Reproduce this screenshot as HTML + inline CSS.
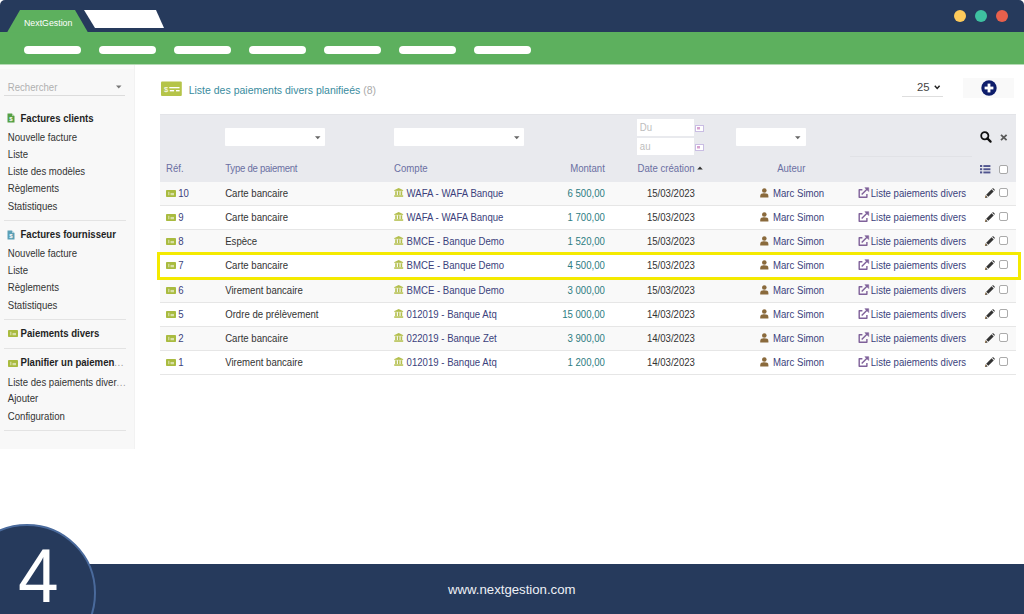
<!DOCTYPE html>
<html><head><meta charset="utf-8"><style>
*{box-sizing:border-box;margin:0;padding:0}
html,body{width:1024px;height:614px;overflow:hidden;background:#fff;font-family:"Liberation Sans",sans-serif}
.t{position:absolute;white-space:nowrap}
.r{position:absolute}
.abs{position:absolute}
svg{position:absolute;overflow:visible}
</style></head><body>
<div class="r" style="left:0px;top:0px;width:1024px;height:33px;background:#263a5c;border-radius:5px 5px 0 0;"></div>
<div class="r" style="left:0px;top:32px;width:1024px;height:32px;background:#5db05e;"></div>
<svg style="left:0;top:0" width="200" height="64"><polygon points="20,10 75,10 88,32.5 7,32.5" fill="#5db05e"/><polygon points="84,10 156,10 164,28 95,28" fill="#fff"/></svg>
<div class="t" style="left:24px;top:18.25px;height:11px;line-height:11px;font-size:8.8px;color:#fff;font-weight:normal;transform:scaleY(1.04);transform-origin:0 8.55px;">NextGestion</div>
<div class="r" style="left:23.5px;top:46px;width:57px;height:8px;background:#fff;border-radius:4px;"></div>
<div class="r" style="left:98.5px;top:46px;width:57px;height:8px;background:#fff;border-radius:4px;"></div>
<div class="r" style="left:173.5px;top:46px;width:57px;height:8px;background:#fff;border-radius:4px;"></div>
<div class="r" style="left:248.5px;top:46px;width:57px;height:8px;background:#fff;border-radius:4px;"></div>
<div class="r" style="left:323.5px;top:46px;width:57px;height:8px;background:#fff;border-radius:4px;"></div>
<div class="r" style="left:398.5px;top:46px;width:57px;height:8px;background:#fff;border-radius:4px;"></div>
<div class="r" style="left:473.5px;top:46px;width:57px;height:8px;background:#fff;border-radius:4px;"></div>
<div class="r" style="left:954px;top:10px;width:12px;height:12px;background:#fdca5b;border-radius:6px;"></div>
<div class="r" style="left:975px;top:10px;width:12px;height:12px;background:#3ec1a1;border-radius:6px;"></div>
<div class="r" style="left:996.3px;top:10px;width:12px;height:12px;background:#e8604c;border-radius:6px;"></div>
<div class="r" style="left:0px;top:64px;width:135px;height:385px;background:#f8f8f8;border-right:1px solid #f2f2f2;"></div>
<div class="r" style="left:0px;top:64px;width:134px;height:5px;background:#fbfbfb;"></div>
<div class="r" style="left:0px;top:64px;width:1024px;height:1px;background:#b5dab5;"></div>
<div class="t" style="left:7.8px;top:81.57px;height:12px;line-height:12px;font-size:9.6px;color:#b0b0b0;font-weight:normal;transform:scaleY(1.04);transform-origin:0 9.33px;">Rechercher</div>
<svg style="left:116px;top:85px" width="6" height="4"><polygon points="0,0.5 5.5,0.5 2.75,3.5" fill="#777"/></svg>
<div class="r" style="left:4px;top:95px;width:121px;height:1px;background:#dcdcdc;"></div>
<svg style="left:7px;top:112.8px" width="8" height="10"><path d="M0.5 0.5 H5 L7.5 3 V9.5 H0.5 Z" fill="#55a045"/><path d="M5 0.5 V3 H7.5" fill="#fff" opacity="0.5"/><text x="4" y="8.3" font-size="6" font-family="Liberation Sans" font-weight="bold" fill="#fff" text-anchor="middle">$</text></svg>
<div class="t" style="left:20.5px;top:112.97px;height:12px;line-height:12px;font-size:9.6px;color:#1f1f1f;font-weight:bold;transform:scaleY(1.04);transform-origin:0 9.33px;">Factures clients</div>
<div class="t" style="left:7.8px;top:131.87px;height:12px;line-height:12px;font-size:9.6px;color:#333;font-weight:normal;transform:scaleY(1.04);transform-origin:0 9.33px;">Nouvelle facture</div>
<div class="t" style="left:7.8px;top:148.97px;height:12px;line-height:12px;font-size:9.6px;color:#333;font-weight:normal;transform:scaleY(1.04);transform-origin:0 9.33px;">Liste</div>
<div class="t" style="left:7.8px;top:166.07px;height:12px;line-height:12px;font-size:9.6px;color:#333;font-weight:normal;transform:scaleY(1.04);transform-origin:0 9.33px;">Liste des modèles</div>
<div class="t" style="left:7.8px;top:183.17px;height:12px;line-height:12px;font-size:9.6px;color:#333;font-weight:normal;transform:scaleY(1.04);transform-origin:0 9.33px;">Règlements</div>
<div class="t" style="left:7.8px;top:200.77px;height:12px;line-height:12px;font-size:9.6px;color:#333;font-weight:normal;transform:scaleY(1.04);transform-origin:0 9.33px;">Statistiques</div>
<div class="r" style="left:4px;top:220px;width:122px;height:1px;background:#e3e3e3;"></div>
<svg style="left:7px;top:229.5px" width="8" height="10"><path d="M0.5 0.5 H5 L7.5 3 V9.5 H0.5 Z" fill="#5b9fb5"/><path d="M5 0.5 V3 H7.5" fill="#fff" opacity="0.5"/><text x="4" y="8.3" font-size="6" font-family="Liberation Sans" font-weight="bold" fill="#fff" text-anchor="middle">$</text></svg>
<div class="t" style="left:20.5px;top:229.27px;height:12px;line-height:12px;font-size:9.6px;color:#1f1f1f;font-weight:bold;transform:scaleY(1.04);transform-origin:0 9.33px;">Factures fournisseur</div>
<div class="t" style="left:7.8px;top:247.67px;height:12px;line-height:12px;font-size:9.6px;color:#333;font-weight:normal;transform:scaleY(1.04);transform-origin:0 9.33px;">Nouvelle facture</div>
<div class="t" style="left:7.8px;top:265.27px;height:12px;line-height:12px;font-size:9.6px;color:#333;font-weight:normal;transform:scaleY(1.04);transform-origin:0 9.33px;">Liste</div>
<div class="t" style="left:7.8px;top:282.37px;height:12px;line-height:12px;font-size:9.6px;color:#333;font-weight:normal;transform:scaleY(1.04);transform-origin:0 9.33px;">Règlements</div>
<div class="t" style="left:7.8px;top:299.97px;height:12px;line-height:12px;font-size:9.6px;color:#333;font-weight:normal;transform:scaleY(1.04);transform-origin:0 9.33px;">Statistiques</div>
<div class="r" style="left:4px;top:319px;width:122px;height:1px;background:#e3e3e3;"></div>
<svg style="left:7.5px;top:330px" width="10" height="7"><rect x="0" y="0" width="10" height="7" rx="0.8" fill="#a9bb3f"/><g fill="#fff" opacity="0.55"><rect x="2.20" y="1.75" width="1.20" height="3.50"/><rect x="4.50" y="2.94" width="3.50" height="2.31"/></g></svg>
<div class="t" style="left:20.5px;top:327.77px;height:12px;line-height:12px;font-size:9.6px;color:#1f1f1f;font-weight:bold;transform:scaleY(1.04);transform-origin:0 9.33px;">Paiements divers</div>
<div class="r" style="left:4px;top:348px;width:122px;height:1px;background:#e3e3e3;"></div>
<svg style="left:7.5px;top:359.5px" width="10" height="7"><rect x="0" y="0" width="10" height="7" rx="0.8" fill="#a9bb3f"/><g fill="#fff" opacity="0.55"><rect x="2.20" y="1.75" width="1.20" height="3.50"/><rect x="4.50" y="2.94" width="3.50" height="2.31"/></g></svg>
<div class="t" style="left:20.5px;top:357.17px;height:12px;line-height:12px;font-size:9.6px;color:#1f1f1f;font-weight:bold;transform:scaleY(1.04);transform-origin:0 9.33px;">Planifier un paiemen<span style="color:#9a9a9a;font-weight:normal;letter-spacing:0.6px">...</span></div>
<div class="t" style="left:7.8px;top:376.77px;height:12px;line-height:12px;font-size:9.6px;color:#333;font-weight:normal;transform:scaleY(1.04);transform-origin:0 9.33px;">Liste des paiements diver<span style="color:#9a9a9a;letter-spacing:0.6px">...</span></div>
<div class="t" style="left:7.8px;top:393.07px;height:12px;line-height:12px;font-size:9.6px;color:#333;font-weight:normal;transform:scaleY(1.04);transform-origin:0 9.33px;">Ajouter</div>
<div class="t" style="left:7.8px;top:410.97px;height:12px;line-height:12px;font-size:9.6px;color:#333;font-weight:normal;transform:scaleY(1.04);transform-origin:0 9.33px;">Configuration</div>
<div class="r" style="left:4px;top:430px;width:122px;height:1px;background:#e3e3e3;"></div>
<svg style="left:161px;top:81px" width="21" height="16"><rect y="0.5" width="20.8" height="14.4" rx="1" fill="#b5c449"/><text x="5" y="11" font-size="7.5" font-family="Liberation Sans" fill="#fff" text-anchor="middle">$</text><rect x="8.3" y="6" width="10.2" height="1.3" fill="#fff"/><rect x="8.8" y="9" width="4.3" height="1.4" fill="#fff"/><rect x="15" y="9" width="3.6" height="1.4" fill="#fff"/></svg>
<div class="t" style="left:188.7px;top:82.56px;height:14px;line-height:14px;font-size:10.5px;color:#3a8c9e;font-weight:normal;transform:scaleY(1.04);transform-origin:0 10.64px;">Liste des paiements divers planifieés <span style="color:#aaa">(8)</span></div>
<div class="t" style="left:917px;top:79.78px;height:15px;line-height:15px;font-size:11.3px;color:#444;font-weight:normal;">25</div>
<svg style="left:934px;top:85px" width="7" height="5"><path d="M0.8 0.8 L3.2 3.4 L5.6 0.8" stroke="#222" stroke-width="1.5" fill="none"/></svg>
<div class="r" style="left:902px;top:96px;width:41px;height:1px;background:#dedede;"></div>
<div class="r" style="left:963px;top:78px;width:51px;height:20px;background:#f9f9f9;"></div>
<svg style="left:981px;top:80px" width="16" height="16"><circle cx="8" cy="8" r="7.7" fill="#0e1d6b"/><rect x="3.6" y="6.6" width="8.8" height="2.8" fill="#fff"/><rect x="6.6" y="3.6" width="2.8" height="8.8" fill="#fff"/></svg>
<div class="r" style="left:160px;top:114px;width:856px;height:68px;background:#e9eaee;border-top:1px solid #e3e4e8;"></div>
<div class="r" style="left:850px;top:156px;width:122px;height:1px;background:#e1e2e6;"></div>
<div class="r" style="left:225px;top:128px;width:100px;height:18px;background:#fff;border-radius:1px;"></div>
<svg style="left:314.8px;top:136px" width="6" height="4"><polygon points="0,0.3 5.5,0.3 2.75,3.3" fill="#666"/></svg>
<div class="r" style="left:394px;top:128px;width:130px;height:18px;background:#fff;border-radius:1px;"></div>
<svg style="left:513.8px;top:136px" width="6" height="4"><polygon points="0,0.3 5.5,0.3 2.75,3.3" fill="#666"/></svg>
<div class="r" style="left:736px;top:128px;width:69.5px;height:18px;background:#fff;border-radius:1px;"></div>
<svg style="left:795.3px;top:136px" width="6" height="4"><polygon points="0,0.3 5.5,0.3 2.75,3.3" fill="#666"/></svg>
<div class="r" style="left:636.5px;top:119px;width:57.5px;height:17px;background:#fff;"></div>
<div class="r" style="left:636.5px;top:138px;width:57.5px;height:17px;background:#fff;"></div>
<div class="t" style="left:639.8px;top:121.67px;height:12px;line-height:12px;font-size:9.6px;color:#bdbdbd;font-weight:normal;transform:scaleY(1.04);transform-origin:0 9.33px;">Du</div>
<div class="t" style="left:639.8px;top:140.97px;height:12px;line-height:12px;font-size:9.6px;color:#bdbdbd;font-weight:normal;transform:scaleY(1.04);transform-origin:0 9.33px;">au</div>
<svg style="left:695px;top:124.5px" width="9" height="7"><rect x="0.5" y="0.5" width="8" height="6" fill="#fff" stroke="#c9bde3" stroke-width="1"/><rect x="2" y="2" width="3" height="2.5" fill="#d7a3d0"/></svg>
<svg style="left:695px;top:143.5px" width="9" height="7"><rect x="0.5" y="0.5" width="8" height="6" fill="#fff" stroke="#c9bde3" stroke-width="1"/><rect x="2" y="2" width="3" height="2.5" fill="#d7a3d0"/></svg>
<svg style="left:979.5px;top:131px" width="12" height="12"><circle cx="4.8" cy="4.8" r="3.6" stroke="#111" stroke-width="1.8" fill="none"/><path d="M7.4 7.4 L10.6 10.6" stroke="#111" stroke-width="2.2" stroke-linecap="round"/></svg>
<svg style="left:999.5px;top:134px" width="8" height="7"><path d="M1 0.8 L6.6 6.2 M6.6 0.8 L1 6.2" stroke="#5a5a5a" stroke-width="1.8"/></svg>
<div class="t" style="left:166px;top:162.87px;height:12px;line-height:12px;font-size:9.6px;color:#6b70a3;font-weight:normal;transform:scaleY(1.04);transform-origin:0 9.33px;">Réf.</div>
<div class="t" style="left:225.3px;top:162.87px;height:12px;line-height:12px;font-size:9.6px;color:#6b70a3;font-weight:normal;letter-spacing:-0.27px;transform:scaleY(1.04);transform-origin:0 9.33px;">Type de paiement</div>
<div class="t" style="left:394.1px;top:162.87px;height:12px;line-height:12px;font-size:9.6px;color:#6b70a3;font-weight:normal;transform:scaleY(1.04);transform-origin:0 9.33px;">Compte</div>
<div class="t" style="right:419.20000000000005px;top:162.87px;height:12px;line-height:12px;font-size:9.6px;color:#6b70a3;font-weight:normal;transform:scaleY(1.04);transform-origin:0 9.33px;">Montant</div>
<div class="t" style="left:637.6px;top:162.87px;height:12px;line-height:12px;font-size:9.6px;color:#6b70a3;font-weight:normal;transform:scaleY(1.04);transform-origin:0 9.33px;">Date création</div>
<svg style="left:697px;top:166px" width="7" height="4"><polygon points="0.2,3.5 5.8,3.5 3,0.5" fill="#333"/></svg>
<div class="t" style="right:218.60000000000002px;top:162.87px;height:12px;line-height:12px;font-size:9.6px;color:#6b70a3;font-weight:normal;transform:scaleY(1.04);transform-origin:0 9.33px;">Auteur</div>
<svg style="left:980px;top:165px" width="11" height="9"><g fill="#50558e"><rect x="0" y="0" width="2.2" height="2"/><rect x="0" y="3.2" width="2.2" height="2"/><rect x="0" y="6.4" width="2.2" height="2"/><rect x="3.4" y="0.1" width="7" height="1.9"/><rect x="3.4" y="3.3" width="7" height="1.9"/><rect x="3.4" y="6.5" width="7" height="1.9"/></g></svg>
<div class="r" style="left:999px;top:165.3px;width:8.5px;height:8.5px;background:#fff;border:1px solid #a8a8a8;border-radius:2px;"></div>
<div class="r" style="left:160px;top:182px;width:856px;height:23px;background:#f9f9f9;"></div>
<div class="r" style="left:160px;top:205px;width:856px;height:1px;background:#e6e6e6;"></div>
<svg style="left:165.5px;top:190px" width="10" height="7"><rect x="0" y="0" width="10" height="7" rx="0.8" fill="#a9bb3f"/><g fill="#fff" opacity="0.55"><rect x="2.20" y="1.75" width="1.20" height="3.50"/><rect x="4.50" y="2.94" width="3.50" height="2.31"/></g></svg>
<div class="t" style="left:178.2px;top:187.77px;height:12px;line-height:12px;font-size:9.6px;color:#3b3f7c;font-weight:normal;transform:scaleY(1.04);transform-origin:0 9.33px;">10</div>
<div class="t" style="left:225.2px;top:187.77px;height:12px;line-height:12px;font-size:9.6px;color:#333;font-weight:normal;transform:scaleY(1.04);transform-origin:0 9.33px;">Carte bancaire</div>
<svg style="left:393.6px;top:188.2px" width="10" height="9"><g fill="#b3bf4c"><polygon points="4.7,0 9.4,2.3 0,2.3"/><rect x="0.3" y="2.2" width="8.8" height="0.9"/><rect x="1.2" y="3.3" width="1.6" height="3.9"/><rect x="3.9" y="3.3" width="1.6" height="3.9"/><rect x="6.6" y="3.3" width="1.6" height="3.9"/><rect x="0.2" y="7.3" width="9" height="1.5"/></g></svg>
<div class="t" style="left:406.6px;top:187.77px;height:12px;line-height:12px;font-size:9.6px;color:#3b3f7c;font-weight:normal;transform:scaleY(1.04);transform-origin:0 9.33px;">WAFA - WAFA Banque</div>
<div class="t" style="right:419.20000000000005px;top:187.77px;height:12px;line-height:12px;font-size:9.6px;color:#2c7c82;font-weight:normal;transform:scaleY(1.04);transform-origin:0 9.33px;">6 500,00</div>
<div class="t" style="left:646.9px;top:187.77px;height:12px;line-height:12px;font-size:9.6px;color:#333;font-weight:normal;transform:scaleY(1.04);transform-origin:0 9.33px;">15/03/2023</div>
<svg style="left:759.6px;top:188.2px" width="9" height="10"><g fill="#8a6a3c"><circle cx="4.3" cy="2.5" r="2.3"/><path d="M0.2 9.6 V7.9 C0.2 5.9 1.8 5.3 4.3 5.3 C6.8 5.3 8.4 5.9 8.4 7.9 V9.6 Z"/></g></svg>
<div class="t" style="left:773px;top:187.77px;height:12px;line-height:12px;font-size:9.6px;color:#3b3f7c;font-weight:normal;transform:scaleY(1.04);transform-origin:0 9.33px;">Marc Simon</div>
<svg style="left:857.5px;top:187px" width="12" height="12"><g stroke="#7f619a" fill="none" stroke-width="1.4" stroke-linejoin="round"><path d="M4.4 2.7 H1.2 V10.3 H8.9 V7.0"/><path d="M3.7 7.5 L9.2 2.0"/></g><polygon points="6.9,0.7 10.7,0.7 10.7,4.5" fill="#7f619a" stroke="#7f619a" stroke-width="0.6" stroke-linejoin="round"/></svg>
<div class="t" style="left:870.7px;top:187.77px;height:12px;line-height:12px;font-size:9.6px;color:#3b3f7c;font-weight:normal;transform:scaleY(1.04);transform-origin:0 9.33px;">Liste paiements divers</div>
<svg style="left:984.5px;top:188.3px" width="10" height="10"><g fill="#333"><polygon points="0,10 0.6,7.3 2.7,9.4"/><polygon points="1.2,6.7 6.6,1.3 8.7,3.4 3.3,8.8"/><polygon points="7.2,0.7 8.0,0 10,2 9.3,2.8"/></g><path d="M0.3 9.7 L1 7.6" stroke="#d79a4a" stroke-width="0.6"/></svg>
<div class="r" style="left:999px;top:188px;width:8.5px;height:8.5px;background:#fff;border:1px solid #ababab;border-radius:2px;"></div>
<div class="r" style="left:160px;top:229px;width:856px;height:1px;background:#e6e6e6;"></div>
<svg style="left:165.5px;top:214px" width="10" height="7"><rect x="0" y="0" width="10" height="7" rx="0.8" fill="#a9bb3f"/><g fill="#fff" opacity="0.55"><rect x="2.20" y="1.75" width="1.20" height="3.50"/><rect x="4.50" y="2.94" width="3.50" height="2.31"/></g></svg>
<div class="t" style="left:178.2px;top:211.77px;height:12px;line-height:12px;font-size:9.6px;color:#3b3f7c;font-weight:normal;transform:scaleY(1.04);transform-origin:0 9.33px;">9</div>
<div class="t" style="left:225.2px;top:211.77px;height:12px;line-height:12px;font-size:9.6px;color:#333;font-weight:normal;transform:scaleY(1.04);transform-origin:0 9.33px;">Carte bancaire</div>
<svg style="left:393.6px;top:212.2px" width="10" height="9"><g fill="#b3bf4c"><polygon points="4.7,0 9.4,2.3 0,2.3"/><rect x="0.3" y="2.2" width="8.8" height="0.9"/><rect x="1.2" y="3.3" width="1.6" height="3.9"/><rect x="3.9" y="3.3" width="1.6" height="3.9"/><rect x="6.6" y="3.3" width="1.6" height="3.9"/><rect x="0.2" y="7.3" width="9" height="1.5"/></g></svg>
<div class="t" style="left:406.6px;top:211.77px;height:12px;line-height:12px;font-size:9.6px;color:#3b3f7c;font-weight:normal;transform:scaleY(1.04);transform-origin:0 9.33px;">WAFA - WAFA Banque</div>
<div class="t" style="right:419.20000000000005px;top:211.77px;height:12px;line-height:12px;font-size:9.6px;color:#2c7c82;font-weight:normal;transform:scaleY(1.04);transform-origin:0 9.33px;">1 700,00</div>
<div class="t" style="left:646.9px;top:211.77px;height:12px;line-height:12px;font-size:9.6px;color:#333;font-weight:normal;transform:scaleY(1.04);transform-origin:0 9.33px;">15/03/2023</div>
<svg style="left:759.6px;top:212.2px" width="9" height="10"><g fill="#8a6a3c"><circle cx="4.3" cy="2.5" r="2.3"/><path d="M0.2 9.6 V7.9 C0.2 5.9 1.8 5.3 4.3 5.3 C6.8 5.3 8.4 5.9 8.4 7.9 V9.6 Z"/></g></svg>
<div class="t" style="left:773px;top:211.77px;height:12px;line-height:12px;font-size:9.6px;color:#3b3f7c;font-weight:normal;transform:scaleY(1.04);transform-origin:0 9.33px;">Marc Simon</div>
<svg style="left:857.5px;top:211px" width="12" height="12"><g stroke="#7f619a" fill="none" stroke-width="1.4" stroke-linejoin="round"><path d="M4.4 2.7 H1.2 V10.3 H8.9 V7.0"/><path d="M3.7 7.5 L9.2 2.0"/></g><polygon points="6.9,0.7 10.7,0.7 10.7,4.5" fill="#7f619a" stroke="#7f619a" stroke-width="0.6" stroke-linejoin="round"/></svg>
<div class="t" style="left:870.7px;top:211.77px;height:12px;line-height:12px;font-size:9.6px;color:#3b3f7c;font-weight:normal;transform:scaleY(1.04);transform-origin:0 9.33px;">Liste paiements divers</div>
<svg style="left:984.5px;top:212.3px" width="10" height="10"><g fill="#333"><polygon points="0,10 0.6,7.3 2.7,9.4"/><polygon points="1.2,6.7 6.6,1.3 8.7,3.4 3.3,8.8"/><polygon points="7.2,0.7 8.0,0 10,2 9.3,2.8"/></g><path d="M0.3 9.7 L1 7.6" stroke="#d79a4a" stroke-width="0.6"/></svg>
<div class="r" style="left:999px;top:212px;width:8.5px;height:8.5px;background:#fff;border:1px solid #ababab;border-radius:2px;"></div>
<div class="r" style="left:160px;top:230px;width:856px;height:23px;background:#f9f9f9;"></div>
<div class="r" style="left:160px;top:253px;width:856px;height:1px;background:#e6e6e6;"></div>
<svg style="left:165.5px;top:238px" width="10" height="7"><rect x="0" y="0" width="10" height="7" rx="0.8" fill="#a9bb3f"/><g fill="#fff" opacity="0.55"><rect x="2.20" y="1.75" width="1.20" height="3.50"/><rect x="4.50" y="2.94" width="3.50" height="2.31"/></g></svg>
<div class="t" style="left:178.2px;top:235.77px;height:12px;line-height:12px;font-size:9.6px;color:#3b3f7c;font-weight:normal;transform:scaleY(1.04);transform-origin:0 9.33px;">8</div>
<div class="t" style="left:225.2px;top:235.77px;height:12px;line-height:12px;font-size:9.6px;color:#333;font-weight:normal;transform:scaleY(1.04);transform-origin:0 9.33px;">Espèce</div>
<svg style="left:393.6px;top:236.2px" width="10" height="9"><g fill="#b3bf4c"><polygon points="4.7,0 9.4,2.3 0,2.3"/><rect x="0.3" y="2.2" width="8.8" height="0.9"/><rect x="1.2" y="3.3" width="1.6" height="3.9"/><rect x="3.9" y="3.3" width="1.6" height="3.9"/><rect x="6.6" y="3.3" width="1.6" height="3.9"/><rect x="0.2" y="7.3" width="9" height="1.5"/></g></svg>
<div class="t" style="left:406.6px;top:235.77px;height:12px;line-height:12px;font-size:9.6px;color:#3b3f7c;font-weight:normal;transform:scaleY(1.04);transform-origin:0 9.33px;">BMCE - Banque Demo</div>
<div class="t" style="right:419.20000000000005px;top:235.77px;height:12px;line-height:12px;font-size:9.6px;color:#2c7c82;font-weight:normal;transform:scaleY(1.04);transform-origin:0 9.33px;">1 520,00</div>
<div class="t" style="left:646.9px;top:235.77px;height:12px;line-height:12px;font-size:9.6px;color:#333;font-weight:normal;transform:scaleY(1.04);transform-origin:0 9.33px;">15/03/2023</div>
<svg style="left:759.6px;top:236.2px" width="9" height="10"><g fill="#8a6a3c"><circle cx="4.3" cy="2.5" r="2.3"/><path d="M0.2 9.6 V7.9 C0.2 5.9 1.8 5.3 4.3 5.3 C6.8 5.3 8.4 5.9 8.4 7.9 V9.6 Z"/></g></svg>
<div class="t" style="left:773px;top:235.77px;height:12px;line-height:12px;font-size:9.6px;color:#3b3f7c;font-weight:normal;transform:scaleY(1.04);transform-origin:0 9.33px;">Marc Simon</div>
<svg style="left:857.5px;top:235px" width="12" height="12"><g stroke="#7f619a" fill="none" stroke-width="1.4" stroke-linejoin="round"><path d="M4.4 2.7 H1.2 V10.3 H8.9 V7.0"/><path d="M3.7 7.5 L9.2 2.0"/></g><polygon points="6.9,0.7 10.7,0.7 10.7,4.5" fill="#7f619a" stroke="#7f619a" stroke-width="0.6" stroke-linejoin="round"/></svg>
<div class="t" style="left:870.7px;top:235.77px;height:12px;line-height:12px;font-size:9.6px;color:#3b3f7c;font-weight:normal;transform:scaleY(1.04);transform-origin:0 9.33px;">Liste paiements divers</div>
<svg style="left:984.5px;top:236.3px" width="10" height="10"><g fill="#333"><polygon points="0,10 0.6,7.3 2.7,9.4"/><polygon points="1.2,6.7 6.6,1.3 8.7,3.4 3.3,8.8"/><polygon points="7.2,0.7 8.0,0 10,2 9.3,2.8"/></g><path d="M0.3 9.7 L1 7.6" stroke="#d79a4a" stroke-width="0.6"/></svg>
<div class="r" style="left:999px;top:236px;width:8.5px;height:8.5px;background:#fff;border:1px solid #ababab;border-radius:2px;"></div>
<div class="r" style="left:160px;top:277px;width:856px;height:1px;background:#e6e6e6;"></div>
<svg style="left:165.5px;top:262px" width="10" height="7"><rect x="0" y="0" width="10" height="7" rx="0.8" fill="#a9bb3f"/><g fill="#fff" opacity="0.55"><rect x="2.20" y="1.75" width="1.20" height="3.50"/><rect x="4.50" y="2.94" width="3.50" height="2.31"/></g></svg>
<div class="t" style="left:178.2px;top:259.77px;height:12px;line-height:12px;font-size:9.6px;color:#3b3f7c;font-weight:normal;transform:scaleY(1.04);transform-origin:0 9.33px;">7</div>
<div class="t" style="left:225.2px;top:259.77px;height:12px;line-height:12px;font-size:9.6px;color:#333;font-weight:normal;transform:scaleY(1.04);transform-origin:0 9.33px;">Carte bancaire</div>
<svg style="left:393.6px;top:260.2px" width="10" height="9"><g fill="#b3bf4c"><polygon points="4.7,0 9.4,2.3 0,2.3"/><rect x="0.3" y="2.2" width="8.8" height="0.9"/><rect x="1.2" y="3.3" width="1.6" height="3.9"/><rect x="3.9" y="3.3" width="1.6" height="3.9"/><rect x="6.6" y="3.3" width="1.6" height="3.9"/><rect x="0.2" y="7.3" width="9" height="1.5"/></g></svg>
<div class="t" style="left:406.6px;top:259.77px;height:12px;line-height:12px;font-size:9.6px;color:#3b3f7c;font-weight:normal;transform:scaleY(1.04);transform-origin:0 9.33px;">BMCE - Banque Demo</div>
<div class="t" style="right:419.20000000000005px;top:259.77px;height:12px;line-height:12px;font-size:9.6px;color:#2c7c82;font-weight:normal;transform:scaleY(1.04);transform-origin:0 9.33px;">4 500,00</div>
<div class="t" style="left:646.9px;top:259.77px;height:12px;line-height:12px;font-size:9.6px;color:#333;font-weight:normal;transform:scaleY(1.04);transform-origin:0 9.33px;">15/03/2023</div>
<svg style="left:759.6px;top:260.2px" width="9" height="10"><g fill="#8a6a3c"><circle cx="4.3" cy="2.5" r="2.3"/><path d="M0.2 9.6 V7.9 C0.2 5.9 1.8 5.3 4.3 5.3 C6.8 5.3 8.4 5.9 8.4 7.9 V9.6 Z"/></g></svg>
<div class="t" style="left:773px;top:259.77px;height:12px;line-height:12px;font-size:9.6px;color:#3b3f7c;font-weight:normal;transform:scaleY(1.04);transform-origin:0 9.33px;">Marc Simon</div>
<svg style="left:857.5px;top:259px" width="12" height="12"><g stroke="#7f619a" fill="none" stroke-width="1.4" stroke-linejoin="round"><path d="M4.4 2.7 H1.2 V10.3 H8.9 V7.0"/><path d="M3.7 7.5 L9.2 2.0"/></g><polygon points="6.9,0.7 10.7,0.7 10.7,4.5" fill="#7f619a" stroke="#7f619a" stroke-width="0.6" stroke-linejoin="round"/></svg>
<div class="t" style="left:870.7px;top:259.77px;height:12px;line-height:12px;font-size:9.6px;color:#3b3f7c;font-weight:normal;transform:scaleY(1.04);transform-origin:0 9.33px;">Liste paiements divers</div>
<svg style="left:984.5px;top:260.3px" width="10" height="10"><g fill="#333"><polygon points="0,10 0.6,7.3 2.7,9.4"/><polygon points="1.2,6.7 6.6,1.3 8.7,3.4 3.3,8.8"/><polygon points="7.2,0.7 8.0,0 10,2 9.3,2.8"/></g><path d="M0.3 9.7 L1 7.6" stroke="#d79a4a" stroke-width="0.6"/></svg>
<div class="r" style="left:999px;top:260px;width:8.5px;height:8.5px;background:#fff;border:1px solid #ababab;border-radius:2px;"></div>
<div class="r" style="left:160px;top:278px;width:856px;height:24px;background:#f9f9f9;"></div>
<div class="r" style="left:160px;top:302px;width:856px;height:1px;background:#e6e6e6;"></div>
<svg style="left:165.5px;top:287px" width="10" height="7"><rect x="0" y="0" width="10" height="7" rx="0.8" fill="#a9bb3f"/><g fill="#fff" opacity="0.55"><rect x="2.20" y="1.75" width="1.20" height="3.50"/><rect x="4.50" y="2.94" width="3.50" height="2.31"/></g></svg>
<div class="t" style="left:178.2px;top:284.77px;height:12px;line-height:12px;font-size:9.6px;color:#3b3f7c;font-weight:normal;transform:scaleY(1.04);transform-origin:0 9.33px;">6</div>
<div class="t" style="left:225.2px;top:284.77px;height:12px;line-height:12px;font-size:9.6px;color:#333;font-weight:normal;transform:scaleY(1.04);transform-origin:0 9.33px;">Virement bancaire</div>
<svg style="left:393.6px;top:285.2px" width="10" height="9"><g fill="#b3bf4c"><polygon points="4.7,0 9.4,2.3 0,2.3"/><rect x="0.3" y="2.2" width="8.8" height="0.9"/><rect x="1.2" y="3.3" width="1.6" height="3.9"/><rect x="3.9" y="3.3" width="1.6" height="3.9"/><rect x="6.6" y="3.3" width="1.6" height="3.9"/><rect x="0.2" y="7.3" width="9" height="1.5"/></g></svg>
<div class="t" style="left:406.6px;top:284.77px;height:12px;line-height:12px;font-size:9.6px;color:#3b3f7c;font-weight:normal;transform:scaleY(1.04);transform-origin:0 9.33px;">BMCE - Banque Demo</div>
<div class="t" style="right:419.20000000000005px;top:284.77px;height:12px;line-height:12px;font-size:9.6px;color:#2c7c82;font-weight:normal;transform:scaleY(1.04);transform-origin:0 9.33px;">3 000,00</div>
<div class="t" style="left:646.9px;top:284.77px;height:12px;line-height:12px;font-size:9.6px;color:#333;font-weight:normal;transform:scaleY(1.04);transform-origin:0 9.33px;">15/03/2023</div>
<svg style="left:759.6px;top:285.2px" width="9" height="10"><g fill="#8a6a3c"><circle cx="4.3" cy="2.5" r="2.3"/><path d="M0.2 9.6 V7.9 C0.2 5.9 1.8 5.3 4.3 5.3 C6.8 5.3 8.4 5.9 8.4 7.9 V9.6 Z"/></g></svg>
<div class="t" style="left:773px;top:284.77px;height:12px;line-height:12px;font-size:9.6px;color:#3b3f7c;font-weight:normal;transform:scaleY(1.04);transform-origin:0 9.33px;">Marc Simon</div>
<svg style="left:857.5px;top:284px" width="12" height="12"><g stroke="#7f619a" fill="none" stroke-width="1.4" stroke-linejoin="round"><path d="M4.4 2.7 H1.2 V10.3 H8.9 V7.0"/><path d="M3.7 7.5 L9.2 2.0"/></g><polygon points="6.9,0.7 10.7,0.7 10.7,4.5" fill="#7f619a" stroke="#7f619a" stroke-width="0.6" stroke-linejoin="round"/></svg>
<div class="t" style="left:870.7px;top:284.77px;height:12px;line-height:12px;font-size:9.6px;color:#3b3f7c;font-weight:normal;transform:scaleY(1.04);transform-origin:0 9.33px;">Liste paiements divers</div>
<svg style="left:984.5px;top:285.3px" width="10" height="10"><g fill="#333"><polygon points="0,10 0.6,7.3 2.7,9.4"/><polygon points="1.2,6.7 6.6,1.3 8.7,3.4 3.3,8.8"/><polygon points="7.2,0.7 8.0,0 10,2 9.3,2.8"/></g><path d="M0.3 9.7 L1 7.6" stroke="#d79a4a" stroke-width="0.6"/></svg>
<div class="r" style="left:999px;top:285px;width:8.5px;height:8.5px;background:#fff;border:1px solid #ababab;border-radius:2px;"></div>
<div class="r" style="left:160px;top:326px;width:856px;height:1px;background:#e6e6e6;"></div>
<svg style="left:165.5px;top:311px" width="10" height="7"><rect x="0" y="0" width="10" height="7" rx="0.8" fill="#a9bb3f"/><g fill="#fff" opacity="0.55"><rect x="2.20" y="1.75" width="1.20" height="3.50"/><rect x="4.50" y="2.94" width="3.50" height="2.31"/></g></svg>
<div class="t" style="left:178.2px;top:308.77px;height:12px;line-height:12px;font-size:9.6px;color:#3b3f7c;font-weight:normal;transform:scaleY(1.04);transform-origin:0 9.33px;">5</div>
<div class="t" style="left:225.2px;top:308.77px;height:12px;line-height:12px;font-size:9.6px;color:#333;font-weight:normal;transform:scaleY(1.04);transform-origin:0 9.33px;">Ordre de prélèvement</div>
<svg style="left:393.6px;top:309.2px" width="10" height="9"><g fill="#b3bf4c"><polygon points="4.7,0 9.4,2.3 0,2.3"/><rect x="0.3" y="2.2" width="8.8" height="0.9"/><rect x="1.2" y="3.3" width="1.6" height="3.9"/><rect x="3.9" y="3.3" width="1.6" height="3.9"/><rect x="6.6" y="3.3" width="1.6" height="3.9"/><rect x="0.2" y="7.3" width="9" height="1.5"/></g></svg>
<div class="t" style="left:406.6px;top:308.77px;height:12px;line-height:12px;font-size:9.6px;color:#3b3f7c;font-weight:normal;transform:scaleY(1.04);transform-origin:0 9.33px;">012019 - Banque Atq</div>
<div class="t" style="right:419.20000000000005px;top:308.77px;height:12px;line-height:12px;font-size:9.6px;color:#2c7c82;font-weight:normal;transform:scaleY(1.04);transform-origin:0 9.33px;">15 000,00</div>
<div class="t" style="left:646.9px;top:308.77px;height:12px;line-height:12px;font-size:9.6px;color:#333;font-weight:normal;transform:scaleY(1.04);transform-origin:0 9.33px;">14/03/2023</div>
<svg style="left:759.6px;top:309.2px" width="9" height="10"><g fill="#8a6a3c"><circle cx="4.3" cy="2.5" r="2.3"/><path d="M0.2 9.6 V7.9 C0.2 5.9 1.8 5.3 4.3 5.3 C6.8 5.3 8.4 5.9 8.4 7.9 V9.6 Z"/></g></svg>
<div class="t" style="left:773px;top:308.77px;height:12px;line-height:12px;font-size:9.6px;color:#3b3f7c;font-weight:normal;transform:scaleY(1.04);transform-origin:0 9.33px;">Marc Simon</div>
<svg style="left:857.5px;top:308px" width="12" height="12"><g stroke="#7f619a" fill="none" stroke-width="1.4" stroke-linejoin="round"><path d="M4.4 2.7 H1.2 V10.3 H8.9 V7.0"/><path d="M3.7 7.5 L9.2 2.0"/></g><polygon points="6.9,0.7 10.7,0.7 10.7,4.5" fill="#7f619a" stroke="#7f619a" stroke-width="0.6" stroke-linejoin="round"/></svg>
<div class="t" style="left:870.7px;top:308.77px;height:12px;line-height:12px;font-size:9.6px;color:#3b3f7c;font-weight:normal;transform:scaleY(1.04);transform-origin:0 9.33px;">Liste paiements divers</div>
<svg style="left:984.5px;top:309.3px" width="10" height="10"><g fill="#333"><polygon points="0,10 0.6,7.3 2.7,9.4"/><polygon points="1.2,6.7 6.6,1.3 8.7,3.4 3.3,8.8"/><polygon points="7.2,0.7 8.0,0 10,2 9.3,2.8"/></g><path d="M0.3 9.7 L1 7.6" stroke="#d79a4a" stroke-width="0.6"/></svg>
<div class="r" style="left:999px;top:309px;width:8.5px;height:8.5px;background:#fff;border:1px solid #ababab;border-radius:2px;"></div>
<div class="r" style="left:160px;top:327px;width:856px;height:23px;background:#f9f9f9;"></div>
<div class="r" style="left:160px;top:350px;width:856px;height:1px;background:#e6e6e6;"></div>
<svg style="left:165.5px;top:335px" width="10" height="7"><rect x="0" y="0" width="10" height="7" rx="0.8" fill="#a9bb3f"/><g fill="#fff" opacity="0.55"><rect x="2.20" y="1.75" width="1.20" height="3.50"/><rect x="4.50" y="2.94" width="3.50" height="2.31"/></g></svg>
<div class="t" style="left:178.2px;top:332.77px;height:12px;line-height:12px;font-size:9.6px;color:#3b3f7c;font-weight:normal;transform:scaleY(1.04);transform-origin:0 9.33px;">2</div>
<div class="t" style="left:225.2px;top:332.77px;height:12px;line-height:12px;font-size:9.6px;color:#333;font-weight:normal;transform:scaleY(1.04);transform-origin:0 9.33px;">Carte bancaire</div>
<svg style="left:393.6px;top:333.2px" width="10" height="9"><g fill="#b3bf4c"><polygon points="4.7,0 9.4,2.3 0,2.3"/><rect x="0.3" y="2.2" width="8.8" height="0.9"/><rect x="1.2" y="3.3" width="1.6" height="3.9"/><rect x="3.9" y="3.3" width="1.6" height="3.9"/><rect x="6.6" y="3.3" width="1.6" height="3.9"/><rect x="0.2" y="7.3" width="9" height="1.5"/></g></svg>
<div class="t" style="left:406.6px;top:332.77px;height:12px;line-height:12px;font-size:9.6px;color:#3b3f7c;font-weight:normal;transform:scaleY(1.04);transform-origin:0 9.33px;">022019 - Banque Zet</div>
<div class="t" style="right:419.20000000000005px;top:332.77px;height:12px;line-height:12px;font-size:9.6px;color:#2c7c82;font-weight:normal;transform:scaleY(1.04);transform-origin:0 9.33px;">3 900,00</div>
<div class="t" style="left:646.9px;top:332.77px;height:12px;line-height:12px;font-size:9.6px;color:#333;font-weight:normal;transform:scaleY(1.04);transform-origin:0 9.33px;">14/03/2023</div>
<svg style="left:759.6px;top:333.2px" width="9" height="10"><g fill="#8a6a3c"><circle cx="4.3" cy="2.5" r="2.3"/><path d="M0.2 9.6 V7.9 C0.2 5.9 1.8 5.3 4.3 5.3 C6.8 5.3 8.4 5.9 8.4 7.9 V9.6 Z"/></g></svg>
<div class="t" style="left:773px;top:332.77px;height:12px;line-height:12px;font-size:9.6px;color:#3b3f7c;font-weight:normal;transform:scaleY(1.04);transform-origin:0 9.33px;">Marc Simon</div>
<svg style="left:857.5px;top:332px" width="12" height="12"><g stroke="#7f619a" fill="none" stroke-width="1.4" stroke-linejoin="round"><path d="M4.4 2.7 H1.2 V10.3 H8.9 V7.0"/><path d="M3.7 7.5 L9.2 2.0"/></g><polygon points="6.9,0.7 10.7,0.7 10.7,4.5" fill="#7f619a" stroke="#7f619a" stroke-width="0.6" stroke-linejoin="round"/></svg>
<div class="t" style="left:870.7px;top:332.77px;height:12px;line-height:12px;font-size:9.6px;color:#3b3f7c;font-weight:normal;transform:scaleY(1.04);transform-origin:0 9.33px;">Liste paiements divers</div>
<svg style="left:984.5px;top:333.3px" width="10" height="10"><g fill="#333"><polygon points="0,10 0.6,7.3 2.7,9.4"/><polygon points="1.2,6.7 6.6,1.3 8.7,3.4 3.3,8.8"/><polygon points="7.2,0.7 8.0,0 10,2 9.3,2.8"/></g><path d="M0.3 9.7 L1 7.6" stroke="#d79a4a" stroke-width="0.6"/></svg>
<div class="r" style="left:999px;top:333px;width:8.5px;height:8.5px;background:#fff;border:1px solid #ababab;border-radius:2px;"></div>
<div class="r" style="left:160px;top:374px;width:856px;height:1px;background:#e6e6e6;"></div>
<svg style="left:165.5px;top:359px" width="10" height="7"><rect x="0" y="0" width="10" height="7" rx="0.8" fill="#a9bb3f"/><g fill="#fff" opacity="0.55"><rect x="2.20" y="1.75" width="1.20" height="3.50"/><rect x="4.50" y="2.94" width="3.50" height="2.31"/></g></svg>
<div class="t" style="left:178.2px;top:356.77px;height:12px;line-height:12px;font-size:9.6px;color:#3b3f7c;font-weight:normal;transform:scaleY(1.04);transform-origin:0 9.33px;">1</div>
<div class="t" style="left:225.2px;top:356.77px;height:12px;line-height:12px;font-size:9.6px;color:#333;font-weight:normal;transform:scaleY(1.04);transform-origin:0 9.33px;">Virement bancaire</div>
<svg style="left:393.6px;top:357.2px" width="10" height="9"><g fill="#b3bf4c"><polygon points="4.7,0 9.4,2.3 0,2.3"/><rect x="0.3" y="2.2" width="8.8" height="0.9"/><rect x="1.2" y="3.3" width="1.6" height="3.9"/><rect x="3.9" y="3.3" width="1.6" height="3.9"/><rect x="6.6" y="3.3" width="1.6" height="3.9"/><rect x="0.2" y="7.3" width="9" height="1.5"/></g></svg>
<div class="t" style="left:406.6px;top:356.77px;height:12px;line-height:12px;font-size:9.6px;color:#3b3f7c;font-weight:normal;transform:scaleY(1.04);transform-origin:0 9.33px;">012019 - Banque Atq</div>
<div class="t" style="right:419.20000000000005px;top:356.77px;height:12px;line-height:12px;font-size:9.6px;color:#2c7c82;font-weight:normal;transform:scaleY(1.04);transform-origin:0 9.33px;">1 200,00</div>
<div class="t" style="left:646.9px;top:356.77px;height:12px;line-height:12px;font-size:9.6px;color:#333;font-weight:normal;transform:scaleY(1.04);transform-origin:0 9.33px;">14/03/2023</div>
<svg style="left:759.6px;top:357.2px" width="9" height="10"><g fill="#8a6a3c"><circle cx="4.3" cy="2.5" r="2.3"/><path d="M0.2 9.6 V7.9 C0.2 5.9 1.8 5.3 4.3 5.3 C6.8 5.3 8.4 5.9 8.4 7.9 V9.6 Z"/></g></svg>
<div class="t" style="left:773px;top:356.77px;height:12px;line-height:12px;font-size:9.6px;color:#3b3f7c;font-weight:normal;transform:scaleY(1.04);transform-origin:0 9.33px;">Marc Simon</div>
<svg style="left:857.5px;top:356px" width="12" height="12"><g stroke="#7f619a" fill="none" stroke-width="1.4" stroke-linejoin="round"><path d="M4.4 2.7 H1.2 V10.3 H8.9 V7.0"/><path d="M3.7 7.5 L9.2 2.0"/></g><polygon points="6.9,0.7 10.7,0.7 10.7,4.5" fill="#7f619a" stroke="#7f619a" stroke-width="0.6" stroke-linejoin="round"/></svg>
<div class="t" style="left:870.7px;top:356.77px;height:12px;line-height:12px;font-size:9.6px;color:#3b3f7c;font-weight:normal;transform:scaleY(1.04);transform-origin:0 9.33px;">Liste paiements divers</div>
<svg style="left:984.5px;top:357.3px" width="10" height="10"><g fill="#333"><polygon points="0,10 0.6,7.3 2.7,9.4"/><polygon points="1.2,6.7 6.6,1.3 8.7,3.4 3.3,8.8"/><polygon points="7.2,0.7 8.0,0 10,2 9.3,2.8"/></g><path d="M0.3 9.7 L1 7.6" stroke="#d79a4a" stroke-width="0.6"/></svg>
<div class="r" style="left:999px;top:357px;width:8.5px;height:8.5px;background:#fff;border:1px solid #ababab;border-radius:2px;"></div>
<div class="r" style="left:157px;top:252px;width:864px;height:28px;background:transparent;border:3px solid #f4ea00;"></div>
<div class="r" style="left:0px;top:564px;width:1024px;height:50px;background:#263a5c;"></div>
<svg style="left:0;top:0" width="1024" height="614"><circle cx="27" cy="593" r="68" fill="#263a5c" stroke="#4a6a9c" stroke-width="2"/></svg>
<div class="t" style="left:18.2px;top:525.95px;height:99px;line-height:99px;font-size:76px;color:#fff;font-weight:normal;transform:scaleX(0.96);transform-origin:0 0;">4</div>
<div class="t" style="left:448px;top:580.72px;height:17px;line-height:17px;font-size:13.2px;color:#eef1f6;font-weight:normal;">www.nextgestion.com</div>
</body></html>
